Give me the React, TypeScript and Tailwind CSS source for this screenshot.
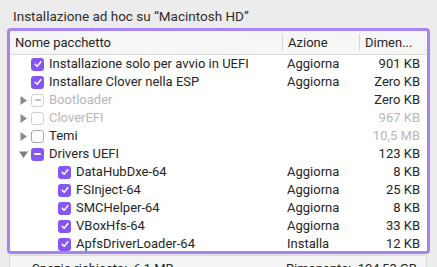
import { Fragment } from 'react';

type Row = {
  name: string;
  action?: string;
  size: string;
  state: 'on' | 'off' | 'mixed';
  level: 0 | 1;
  disclosure?: 'open' | 'closed';
  disabled?: boolean;
  sizeDim?: boolean;
};

const rows: Row[] = [
  { name: 'Installazione solo per avvio in UEFI', action: 'Aggiorna', size: '901 KB', state: 'on', level: 0 },
  { name: 'Installare Clover nella ESP', action: 'Aggiorna', size: 'Zero KB', state: 'on', level: 0 },
  { name: 'Bootloader', size: 'Zero KB', state: 'mixed', level: 0, disclosure: 'closed', disabled: true },
  { name: 'CloverEFI', size: '967 KB', state: 'off', level: 0, disclosure: 'closed', disabled: true, sizeDim: true },
  { name: 'Temi', size: '10,5 MB', state: 'off', level: 0, disclosure: 'closed', sizeDim: true },
  { name: 'Drivers UEFI', size: '123 KB', state: 'mixed', level: 0, disclosure: 'open' },
  { name: 'DataHubDxe-64', action: 'Aggiorna', size: '8 KB', state: 'on', level: 1 },
  { name: 'FSInject-64', action: 'Aggiorna', size: '25 KB', state: 'on', level: 1 },
  { name: 'SMCHelper-64', action: 'Aggiorna', size: '8 KB', state: 'on', level: 1 },
  { name: 'VBoxHfs-64', action: 'Aggiorna', size: '33 KB', state: 'on', level: 1 },
  { name: 'ApfsDriverLoader-64', action: 'Installa', size: '12 KB', state: 'on', level: 1 },
];

function Check({ state, disabled }: { state: Row['state']; disabled?: boolean }) {
  if (state === 'on' || (state === 'mixed' && !disabled)) {
    return (
      <span className="flex h-[13px] w-[13px] items-center justify-center rounded-[3px] bg-[#8656f3]">
        {state === 'on' ? (
          <svg viewBox="0 0 12 12" className="h-[10px] w-[10px]">
            <path d="M2.6 6.3 L5 8.6 L9.4 3.2" fill="none" stroke="white" strokeWidth={1.8} strokeLinecap="round" strokeLinejoin="round" />
          </svg>
        ) : (
          <span className="h-[2px] w-[7px] rounded-full bg-white" />
        )}
      </span>
    );
  }
  return (
    <span
      className={
        'flex h-[13px] w-[13px] items-center justify-center rounded-[3px] border bg-white ' +
        (disabled ? 'border-[#d2d2d2]' : 'border-[#a9a9a9]')
      }
    >
      {state === 'mixed' && <span className="h-[1.5px] w-[6px] rounded-full bg-[#bdbdbd]" />}
    </span>
  );
}

function Triangle({ open }: { open: boolean }) {
  return (
    <svg viewBox="0 0 9 9" className="h-[9px] w-[9px]">
      {open ? <path d="M0 1.5 H9 L4.5 8 Z" fill="#7c7c7c" /> : <path d="M1.5 0 V9 L8 4.5 Z" fill="#8c8c8c" />}
    </svg>
  );
}

export default function App() {
  return (
    <div
      className="relative h-[267px] w-[437px] overflow-hidden bg-[#ececec] text-[13px] text-[#262626]"
      style={{ fontFamily: 'Roboto, "Liberation Sans", sans-serif' }}
    >
      <div className="h-[31px] pl-[13px] pt-[6px] text-[13.5px] leading-[20px] text-[#2e2e2e]">
        Installazione ad hoc su “Macintosh HD”
      </div>

      <div className="ml-[10px] h-[220px] w-[417px] overflow-hidden rounded-[1px] bg-white outline-[3px] outline-[#a584f2]">
        <div className="flex h-[24px] border-b border-[#dadada] bg-[#f6f6f6] leading-[23px]">
          <div className="w-[272px] pl-[5px]">Nome pacchetto</div>
          <div className="my-[3px] w-px bg-[#d6d6d6]" />
          <div className="w-[76px] pl-[5px]">Azione</div>
          <div className="my-[3px] w-px bg-[#d6d6d6]" />
          <div className="flex-1 pl-[5px]">Dimen...</div>
        </div>

        {rows.map((r, i) => (
          <Fragment key={i}>
            <div className="flex h-[18px] items-center leading-[18px]">
              <div
                className={
                  'flex w-[272px] items-center ' +
                  (r.level === 1 ? 'pl-[36px] ' : 'pl-[9px] ') +
                  (r.disabled ? 'text-[#b7b7b7]' : '')
                }
              >
                <span className="flex w-[12px] items-center">
                  {r.disclosure && <Triangle open={r.disclosure === 'open'} />}
                </span>
                <Check state={r.state} disabled={r.disabled} />
                <span className="ml-[5px] whitespace-nowrap">{r.name}</span>
              </div>
              <div className="w-[77px] pl-[5px]">{r.action}</div>
              <div className={'flex-1 pr-[7px] text-right ' + (r.sizeDim ? 'text-[#b7b7b7]' : '')}>{r.size}</div>
            </div>
          </Fragment>
        ))}
      </div>

      <div className="ml-[9px] mt-[4px] flex h-[20px] w-[418px] border-x border-t border-[#d8d8d8] bg-[#f4f4f4] pt-[3px] text-[#262626]">
        <div className="w-[254px] pl-[22px]">Spazio richiesto:&nbsp;&nbsp;6,1 MB</div>
        <div className="pl-[22px]">Rimanente:&nbsp;&nbsp;104,53 GB</div>
      </div>
    </div>
  );
}
